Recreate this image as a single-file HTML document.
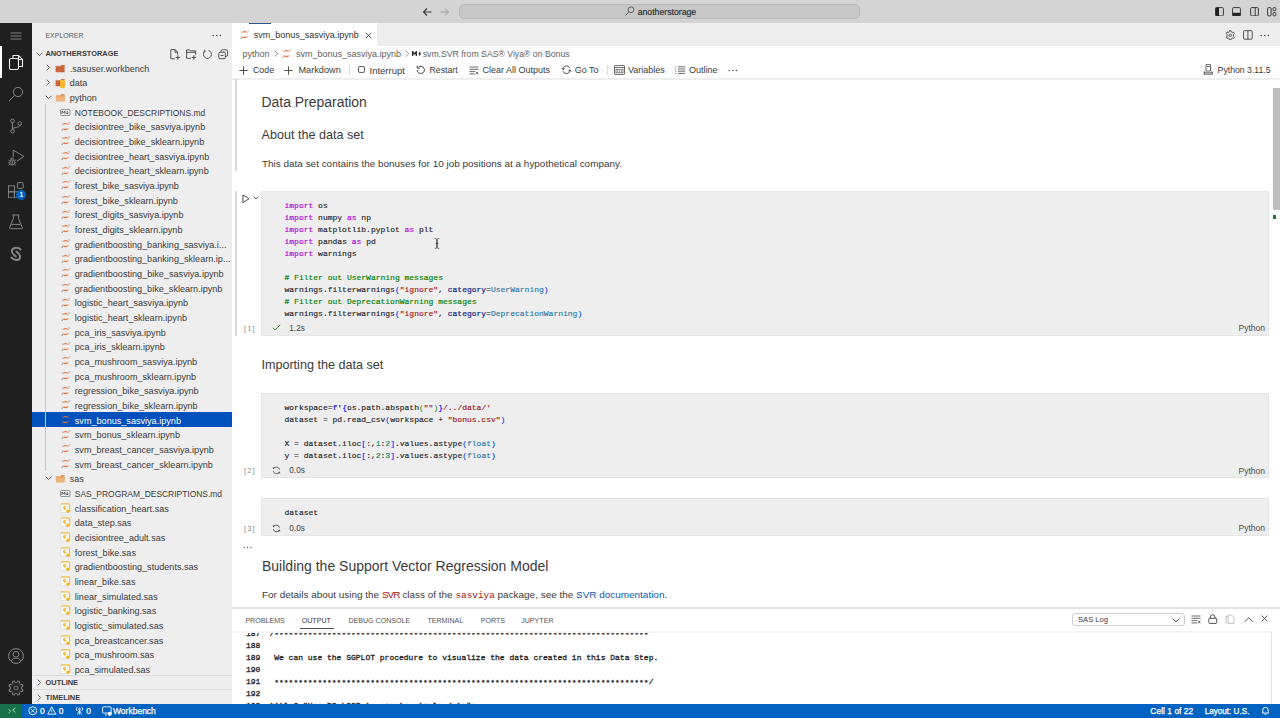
<!DOCTYPE html>
<html><head><meta charset="utf-8"><title>VS Code</title>
<style>
html,body{margin:0;padding:0;}
body{width:1280px;height:718px;overflow:hidden;position:relative;background:#fff;font-family:'Liberation Sans',sans-serif;}
</style></head><body>
<div style="position:absolute;left:0px;top:0px;width:1280px;height:22.5px;background:#d4d4d4;"></div><svg style="position:absolute;left:422px;top:7px;" width="10" height="10" viewBox="0 0 10 10"><path d="M9.5 5H1.5M5 1.5L1.5 5L5 8.5" fill="none" stroke="#3b3b3b" stroke-width="1.2"/></svg><svg style="position:absolute;left:440px;top:7px;" width="10" height="10" viewBox="0 0 10 10"><path d="M0.5 5H8.5M5 1.5L8.5 5L5 8.5" fill="none" stroke="#9a9a9a" stroke-width="1"/></svg><div style="position:absolute;left:458.75px;top:3.9px;width:401px;height:15.6px;background:#c7c7c7;box-sizing:border-box;border:1px solid #b9b9b9;border-radius:5px;"></div><svg style="position:absolute;left:625.3px;top:6.4px;" width="10" height="10" viewBox="0 0 10 10"><circle cx="6" cy="3.8" r="2.9" fill="none" stroke="#444" stroke-width="0.8"/><path d="M3.9 5.9L0.6 9.4" stroke="#444" stroke-width="0.8"/></svg><div style="position:absolute;left:637.7px;top:7.63px;font:400 8.7px/8.7px 'Liberation Sans',sans-serif;color:#2a2a2a;white-space:pre;-webkit-text-stroke:0.15px #2a2a2a;">anotherstorage</div><svg style="position:absolute;left:1215px;top:6.8px;" width="9" height="9.5" viewBox="0 0 9 9.5"><rect x="0.6" y="0.6" width="7.8" height="8.3" rx="1" fill="none" stroke="#3b3b3b" stroke-width="1"/><rect x="0.6" y="0.6" width="3.4" height="8.3" fill="#222"/></svg><svg style="position:absolute;left:1232px;top:6.8px;" width="9" height="9.5" viewBox="0 0 9 9.5"><rect x="0.6" y="0.6" width="7.8" height="8.3" rx="1" fill="none" stroke="#3b3b3b" stroke-width="1"/><rect x="0.6" y="5.8" width="7.8" height="3.1" fill="#222"/></svg><svg style="position:absolute;left:1249.5px;top:6.8px;" width="9" height="9.5" viewBox="0 0 9 9.5"><rect x="0.6" y="0.6" width="7.8" height="8.3" rx="1" fill="none" stroke="#3b3b3b" stroke-width="1"/><path d="M5.2 0.6V8.9" stroke="#3b3b3b" stroke-width="1"/></svg><svg style="position:absolute;left:1267px;top:6.8px;" width="10" height="10" viewBox="0 0 10 10"><rect x="0.6" y="0.6" width="3.5" height="8.3" rx="1" fill="none" stroke="#3b3b3b" stroke-width="1"/><rect x="6" y="0.6" width="2.8" height="3.2" rx="1" fill="none" stroke="#3b3b3b" stroke-width="1"/><rect x="6" y="5.5" width="2.8" height="3.4" rx="1" fill="none" stroke="#3b3b3b" stroke-width="1"/></svg><div style="position:absolute;left:0px;top:22.5px;width:32px;height:681.5px;background:#1f1f1f;"></div><svg style="position:absolute;left:10px;top:31.5px;" width="12" height="8" viewBox="0 0 12 8"><path d="M0.5 1H11.5M0.5 4H11.5M0.5 7H11.5" stroke="#8a8a8a" stroke-width="0.9"/></svg><div style="position:absolute;left:0px;top:46px;width:1.5px;height:32px;background:#ffffff;"></div><svg style="position:absolute;left:8px;top:54px;" width="16" height="16" viewBox="0 0 16 16"><g fill="none" stroke="#f0f0f0" stroke-width="1.1"><path d="M5 4V1.5H10.5L14.5 5.5V12.5H10.5"/><path d="M10.5 1.5V5.5H14.5"/><rect x="1.5" y="4.5" width="9" height="11" rx="1.5"/></g></svg><svg style="position:absolute;left:8px;top:86px;" width="16" height="16" viewBox="0 0 16 16"><g fill="none" stroke="#858585" stroke-width="1"><circle cx="10" cy="6" r="4.6"/><path d="M6.7 9.3L1 15"/></g></svg><svg style="position:absolute;left:8px;top:118px;" width="16" height="16" viewBox="0 0 16 16"><g fill="none" stroke="#858585" stroke-width="1"><circle cx="4.5" cy="2.8" r="1.8"/><circle cx="4.5" cy="13.2" r="1.8"/><circle cx="11.8" cy="5.6" r="1.8"/><path d="M4.5 4.6V11.4M11.8 7.4C11.8 10 4.5 9 4.5 11.4"/></g></svg><svg style="position:absolute;left:8px;top:150px;" width="16" height="16" viewBox="0 0 16 16"><g fill="none" stroke="#858585" stroke-width="1"><path d="M5.2 7V0L15.9 6.5L8.9 11.2"/><path d="M2.6 9.6A1.6 1.6 0 0 1 5.8 9.6"/><ellipse cx="4.2" cy="12.4" rx="2.4" ry="2.7"/><path d="M4.2 10.2V15M0.6 10L1.9 10.9M7.8 10L6.5 10.9M0.4 12.6H1.8M6.6 12.6H8M0.6 15.2L1.9 14.2M7.8 15.2L6.5 14.2"/></g></svg><svg style="position:absolute;left:8px;top:182px;" width="16" height="16" viewBox="0 0 16 16"><g fill="none" stroke="#858585" stroke-width="1"><rect x="0.4" y="3.8" width="6" height="6"/><rect x="0.4" y="9.8" width="6" height="6"/><rect x="6.4" y="9.8" width="6" height="6"/><rect x="9.4" y="0.6" width="5.8" height="5.8" rx="0.8"/></g></svg><div style="position:absolute;left:16.1px;top:190px;width:10.2px;height:10.2px;border-radius:50%;background:#0062c1;color:#fff;font:bold 6.5px/10.2px 'Liberation Sans',sans-serif;text-align:center;">1</div><svg style="position:absolute;left:8px;top:214px;" width="16" height="16" viewBox="0 0 16 16"><g fill="none" stroke="#858585" stroke-width="1"><path d="M4.4 1H11.4M5.3 1V4.6L1.6 13.6C1.4 14.2 1.7 14.7 2.3 14.7H13.7C14.3 14.7 14.6 14.2 14.4 13.6L10.6 4.6V1M3.3 10.4H12.7"/></g></svg><svg style="position:absolute;left:8px;top:246px;" width="16" height="16" viewBox="0 0 16 16"><g fill="none" stroke="#858585" stroke-width="1"><path d="M12.4 3.5C11 1.3 5.5 0.6 4 4.2C3.1 6.5 5.5 8.6 7.8 10.3" stroke-width="2.1" stroke-linecap="round"/><path d="M8.6 5.6C10.4 7 12.7 8.8 12 11.6C11.1 14.6 6.2 15 3.6 11.6" stroke-width="2.1" stroke-linecap="round"/></g></svg><svg style="position:absolute;left:8px;top:648px;" width="16" height="16" viewBox="0 0 16 16"><g fill="none" stroke="#858585" stroke-width="1"><circle cx="8" cy="8" r="7.4"/><circle cx="8" cy="6.3" r="2.9"/><path d="M3 13.2C4 10.9 6 10.2 8 10.2C10 10.2 12 10.9 13 13.2"/></g></svg><svg style="position:absolute;left:8px;top:680px;" width="16" height="16" viewBox="0 0 16 16"><g fill="none" stroke="#858585" stroke-width="1"><circle cx="8" cy="8" r="2"/><path d="M8.89 2.67 L9.58 0.87 L11.92 1.84 L11.14 3.60 L12.40 4.86 L14.16 4.08 L15.13 6.42 L13.33 7.11 L13.33 8.89 L15.13 9.58 L14.16 11.92 L12.40 11.14 L11.14 12.40 L11.92 14.16 L9.58 15.13 L8.89 13.33 L7.11 13.33 L6.42 15.13 L4.08 14.16 L4.86 12.40 L3.60 11.14 L1.84 11.92 L0.87 9.58 L2.67 8.89 L2.67 7.11 L0.87 6.42 L1.84 4.08 L3.60 4.86 L4.86 3.60 L4.08 1.84 L6.42 0.87 L7.11 2.67Z" stroke-linejoin="miter"/></g></svg><div style="position:absolute;left:32px;top:22.5px;width:200px;height:681.5px;background:#eeeeee;"></div><div style="position:absolute;left:45.4px;top:31.87px;font:400 7.0px/7.0px 'Liberation Sans',sans-serif;color:#616161;white-space:pre;">EXPLORER</div><svg style="position:absolute;left:212px;top:33.5px;" width="10" height="3" viewBox="0 0 10 3"><circle cx="1.2" cy="1.5" r="0.75" fill="#424242"/><circle cx="4.8" cy="1.5" r="0.75" fill="#424242"/><circle cx="8.4" cy="1.5" r="0.75" fill="#424242"/></svg><svg style="position:absolute;left:35.5px;top:51.7px;" width="7.2" height="4.4" viewBox="0 0 7.2 4.4"><path d="M0.7 0.7L3.6 3.6L6.5 0.7" fill="none" stroke="#616161" stroke-width="0.9"/></svg><div style="position:absolute;left:45.4px;top:50.23px;font:700 7.4px/7.4px 'Liberation Sans',sans-serif;color:#3b3b3b;white-space:pre;">ANOTHERSTORAGE</div><svg style="position:absolute;left:170px;top:48.5px;" width="12" height="12" viewBox="0 0 12 12"><g fill="none" stroke="#424242" stroke-width="0.9"><path d="M4.8 9.8H0.8V0.6H5.2L7.6 3V5.6"/><path d="M5 0.6V3.2H7.6"/><path d="M7.9 6.2V10.6M5.7 8.4H10.1"/></g></svg><svg style="position:absolute;left:186px;top:48.5px;" width="12" height="12" viewBox="0 0 12 12"><g fill="none" stroke="#424242" stroke-width="0.9"><path d="M4.8 9.3H0.6V0.8H3.6L4.6 1.8H9.6V5.6"/><path d="M0.6 3.3H9.6"/><path d="M7.9 6.2V10.6M5.7 8.4H10.1"/></g></svg><svg style="position:absolute;left:202px;top:48.5px;" width="11" height="11" viewBox="0 0 11 11"><g fill="none" stroke="#424242" stroke-width="0.9"><path d="M3 2.2A4 4 0 1 0 6.5 1.5"/><path d="M2.2 0.5L3.2 2.4L1.2 3.3"/></g></svg><svg style="position:absolute;left:218px;top:48.5px;" width="11" height="11" viewBox="0 0 11 11"><g fill="none" stroke="#424242" stroke-width="0.9"><rect x="0.8" y="3.2" width="6.5" height="6.5" rx="1.2"/><path d="M3 3.2V2.2C3 1.4 3.6 0.8 4.4 0.8H8.2C9 0.8 9.6 1.4 9.6 2.2V6C9.6 6.8 9 7.4 8.2 7.4H7.3"/><path d="M2.5 6.5H5.6"/></g></svg><svg style="position:absolute;left:46px;top:64.0px;" width="4.4" height="7.2" viewBox="0 0 4.4 7.2"><path d="M0.7 0.7L3.6 3.6L0.7 6.5" fill="none" stroke="#616161" stroke-width="0.9"/></svg><svg style="position:absolute;left:55.3px;top:63.800000000000004px;" width="10.5" height="10" viewBox="0 0 10.5 10"><path d="M0.6 2.2H5.3L6.3 1H9.6V8.3H0.6Z" fill="#c9653b"/><path d="M0.6 2.2H9.6" stroke="#d47a4c" stroke-width="0.6"/></svg><div style="position:absolute;left:69.7px;top:64.68px;font:400 9.0px/9.0px 'Liberation Sans',sans-serif;color:#3b3b3b;white-space:pre;">.sasuser.workbench</div><svg style="position:absolute;left:46px;top:78.667px;" width="4.4" height="7.2" viewBox="0 0 4.4 7.2"><path d="M0.7 0.7L3.6 3.6L0.7 6.5" fill="none" stroke="#616161" stroke-width="0.9"/></svg><svg style="position:absolute;left:55.3px;top:78.467px;" width="10.5" height="11" viewBox="0 0 10.5 11"><path d="M0.6 2.2H5.3L6.3 1H9.6V8.3H0.6Z" fill="#c9653b"/><path d="M5.2 2.6C5.2 1.6 9.8 1.6 9.8 2.6V9.4C9.8 10.4 5.2 10.4 5.2 9.4Z" fill="#f4b72a"/><path d="M5.2 2.8C5.2 3.6 9.8 3.6 9.8 2.8" fill="none" stroke="#f9d26b" stroke-width="0.6"/></svg><div style="position:absolute;left:69.7px;top:79.35px;font:400 9.0px/9.0px 'Liberation Sans',sans-serif;color:#3b3b3b;white-space:pre;">data</div><svg style="position:absolute;left:44.8px;top:94.834px;" width="7.2" height="4.4" viewBox="0 0 7.2 4.4"><path d="M0.7 0.7L3.6 3.6L6.5 0.7" fill="none" stroke="#616161" stroke-width="0.9"/></svg><svg style="position:absolute;left:55.3px;top:93.134px;" width="10.5" height="10" viewBox="0 0 10.5 10"><path d="M1.2 2.2H5.3L6.3 1H9.6V8.3H1.2Z" fill="#e29a5e"/><path d="M0.3 3.6H9.6V8.3H1.3Z" fill="#eeb47e"/></svg><div style="position:absolute;left:69.7px;top:94.01px;font:400 9.0px/9.0px 'Liberation Sans',sans-serif;color:#3b3b3b;white-space:pre;">python</div><svg style="position:absolute;left:60.2px;top:108.50099999999999px;" width="10.5" height="7" viewBox="0 0 10.5 7"><rect x="0.5" y="0.5" width="9.5" height="6" rx="0.8" fill="none" stroke="#8a8a8a" stroke-width="0.9"/><path d="M2 5V2L3.4 3.6L4.8 2V5M7.2 2V4.8M6 3.7L7.2 5L8.4 3.7" fill="none" stroke="#424242" stroke-width="0.8"/></svg><div style="position:absolute;left:74.8px;top:109.13px;font:400 8.47px/8.47px 'Liberation Sans',sans-serif;color:#3b3b3b;white-space:pre;">NOTEBOOK_DESCRIPTIONS.md</div><svg style="position:absolute;left:61.2px;top:121.768px;" width="9" height="9" viewBox="0 0 9 9"><path d="M0.6 2.9Q4.5 -0.9 8.4 2.9Q4.5 1.8 0.6 2.9Z" fill="#e8733a"/><path d="M0.6 6.3Q4.5 10.1 8.4 6.3Q4.5 7.4 0.6 6.3Z" fill="#e8733a"/><circle cx="8.1" cy="0.9" r="0.55" fill="#7a7a7a"/><circle cx="1.2" cy="8.2" r="0.65" fill="#7a7a7a"/><circle cx="0.8" cy="1.6" r="0.35" fill="#9a9a9a"/></svg><div style="position:absolute;left:74.8px;top:123.26px;font:400 9.1px/9.1px 'Liberation Sans',sans-serif;color:#3b3b3b;white-space:pre;">decisiontree_bike_sasviya.ipynb</div><svg style="position:absolute;left:61.2px;top:136.435px;" width="9" height="9" viewBox="0 0 9 9"><path d="M0.6 2.9Q4.5 -0.9 8.4 2.9Q4.5 1.8 0.6 2.9Z" fill="#e8733a"/><path d="M0.6 6.3Q4.5 10.1 8.4 6.3Q4.5 7.4 0.6 6.3Z" fill="#e8733a"/><circle cx="8.1" cy="0.9" r="0.55" fill="#7a7a7a"/><circle cx="1.2" cy="8.2" r="0.65" fill="#7a7a7a"/><circle cx="0.8" cy="1.6" r="0.35" fill="#9a9a9a"/></svg><div style="position:absolute;left:74.8px;top:137.93px;font:400 9.1px/9.1px 'Liberation Sans',sans-serif;color:#3b3b3b;white-space:pre;">decisiontree_bike_sklearn.ipynb</div><svg style="position:absolute;left:61.2px;top:151.102px;" width="9" height="9" viewBox="0 0 9 9"><path d="M0.6 2.9Q4.5 -0.9 8.4 2.9Q4.5 1.8 0.6 2.9Z" fill="#e8733a"/><path d="M0.6 6.3Q4.5 10.1 8.4 6.3Q4.5 7.4 0.6 6.3Z" fill="#e8733a"/><circle cx="8.1" cy="0.9" r="0.55" fill="#7a7a7a"/><circle cx="1.2" cy="8.2" r="0.65" fill="#7a7a7a"/><circle cx="0.8" cy="1.6" r="0.35" fill="#9a9a9a"/></svg><div style="position:absolute;left:74.8px;top:152.60px;font:400 9.1px/9.1px 'Liberation Sans',sans-serif;color:#3b3b3b;white-space:pre;">decisiontree_heart_sasviya.ipynb</div><svg style="position:absolute;left:61.2px;top:165.769px;" width="9" height="9" viewBox="0 0 9 9"><path d="M0.6 2.9Q4.5 -0.9 8.4 2.9Q4.5 1.8 0.6 2.9Z" fill="#e8733a"/><path d="M0.6 6.3Q4.5 10.1 8.4 6.3Q4.5 7.4 0.6 6.3Z" fill="#e8733a"/><circle cx="8.1" cy="0.9" r="0.55" fill="#7a7a7a"/><circle cx="1.2" cy="8.2" r="0.65" fill="#7a7a7a"/><circle cx="0.8" cy="1.6" r="0.35" fill="#9a9a9a"/></svg><div style="position:absolute;left:74.8px;top:167.24px;font:400 9.13px/9.13px 'Liberation Sans',sans-serif;color:#3b3b3b;white-space:pre;">decisiontree_heart_sklearn.ipynb</div><svg style="position:absolute;left:61.2px;top:180.436px;" width="9" height="9" viewBox="0 0 9 9"><path d="M0.6 2.9Q4.5 -0.9 8.4 2.9Q4.5 1.8 0.6 2.9Z" fill="#e8733a"/><path d="M0.6 6.3Q4.5 10.1 8.4 6.3Q4.5 7.4 0.6 6.3Z" fill="#e8733a"/><circle cx="8.1" cy="0.9" r="0.55" fill="#7a7a7a"/><circle cx="1.2" cy="8.2" r="0.65" fill="#7a7a7a"/><circle cx="0.8" cy="1.6" r="0.35" fill="#9a9a9a"/></svg><div style="position:absolute;left:74.8px;top:181.93px;font:400 9.1px/9.1px 'Liberation Sans',sans-serif;color:#3b3b3b;white-space:pre;">forest_bike_sasviya.ipynb</div><svg style="position:absolute;left:61.2px;top:195.10299999999998px;" width="9" height="9" viewBox="0 0 9 9"><path d="M0.6 2.9Q4.5 -0.9 8.4 2.9Q4.5 1.8 0.6 2.9Z" fill="#e8733a"/><path d="M0.6 6.3Q4.5 10.1 8.4 6.3Q4.5 7.4 0.6 6.3Z" fill="#e8733a"/><circle cx="8.1" cy="0.9" r="0.55" fill="#7a7a7a"/><circle cx="1.2" cy="8.2" r="0.65" fill="#7a7a7a"/><circle cx="0.8" cy="1.6" r="0.35" fill="#9a9a9a"/></svg><div style="position:absolute;left:74.8px;top:196.60px;font:400 9.1px/9.1px 'Liberation Sans',sans-serif;color:#3b3b3b;white-space:pre;">forest_bike_sklearn.ipynb</div><svg style="position:absolute;left:61.2px;top:209.77px;" width="9" height="9" viewBox="0 0 9 9"><path d="M0.6 2.9Q4.5 -0.9 8.4 2.9Q4.5 1.8 0.6 2.9Z" fill="#e8733a"/><path d="M0.6 6.3Q4.5 10.1 8.4 6.3Q4.5 7.4 0.6 6.3Z" fill="#e8733a"/><circle cx="8.1" cy="0.9" r="0.55" fill="#7a7a7a"/><circle cx="1.2" cy="8.2" r="0.65" fill="#7a7a7a"/><circle cx="0.8" cy="1.6" r="0.35" fill="#9a9a9a"/></svg><div style="position:absolute;left:74.8px;top:211.27px;font:400 9.1px/9.1px 'Liberation Sans',sans-serif;color:#3b3b3b;white-space:pre;">forest_digits_sasviya.ipynb</div><svg style="position:absolute;left:61.2px;top:224.43699999999998px;" width="9" height="9" viewBox="0 0 9 9"><path d="M0.6 2.9Q4.5 -0.9 8.4 2.9Q4.5 1.8 0.6 2.9Z" fill="#e8733a"/><path d="M0.6 6.3Q4.5 10.1 8.4 6.3Q4.5 7.4 0.6 6.3Z" fill="#e8733a"/><circle cx="8.1" cy="0.9" r="0.55" fill="#7a7a7a"/><circle cx="1.2" cy="8.2" r="0.65" fill="#7a7a7a"/><circle cx="0.8" cy="1.6" r="0.35" fill="#9a9a9a"/></svg><div style="position:absolute;left:74.8px;top:225.93px;font:400 9.1px/9.1px 'Liberation Sans',sans-serif;color:#3b3b3b;white-space:pre;">forest_digits_sklearn.ipynb</div><svg style="position:absolute;left:61.2px;top:239.104px;" width="9" height="9" viewBox="0 0 9 9"><path d="M0.6 2.9Q4.5 -0.9 8.4 2.9Q4.5 1.8 0.6 2.9Z" fill="#e8733a"/><path d="M0.6 6.3Q4.5 10.1 8.4 6.3Q4.5 7.4 0.6 6.3Z" fill="#e8733a"/><circle cx="8.1" cy="0.9" r="0.55" fill="#7a7a7a"/><circle cx="1.2" cy="8.2" r="0.65" fill="#7a7a7a"/><circle cx="0.8" cy="1.6" r="0.35" fill="#9a9a9a"/></svg><div style="position:absolute;left:74.8px;top:240.60px;font:400 9.1px/9.1px 'Liberation Sans',sans-serif;color:#3b3b3b;white-space:pre;">gradientboosting_banking_sasviya.i...</div><svg style="position:absolute;left:61.2px;top:253.771px;" width="9" height="9" viewBox="0 0 9 9"><path d="M0.6 2.9Q4.5 -0.9 8.4 2.9Q4.5 1.8 0.6 2.9Z" fill="#e8733a"/><path d="M0.6 6.3Q4.5 10.1 8.4 6.3Q4.5 7.4 0.6 6.3Z" fill="#e8733a"/><circle cx="8.1" cy="0.9" r="0.55" fill="#7a7a7a"/><circle cx="1.2" cy="8.2" r="0.65" fill="#7a7a7a"/><circle cx="0.8" cy="1.6" r="0.35" fill="#9a9a9a"/></svg><div style="position:absolute;left:74.8px;top:255.27px;font:400 9.1px/9.1px 'Liberation Sans',sans-serif;color:#3b3b3b;white-space:pre;">gradientboosting_banking_sklearn.ip...</div><svg style="position:absolute;left:61.2px;top:268.438px;" width="9" height="9" viewBox="0 0 9 9"><path d="M0.6 2.9Q4.5 -0.9 8.4 2.9Q4.5 1.8 0.6 2.9Z" fill="#e8733a"/><path d="M0.6 6.3Q4.5 10.1 8.4 6.3Q4.5 7.4 0.6 6.3Z" fill="#e8733a"/><circle cx="8.1" cy="0.9" r="0.55" fill="#7a7a7a"/><circle cx="1.2" cy="8.2" r="0.65" fill="#7a7a7a"/><circle cx="0.8" cy="1.6" r="0.35" fill="#9a9a9a"/></svg><div style="position:absolute;left:74.8px;top:269.92px;font:400 9.12px/9.12px 'Liberation Sans',sans-serif;color:#3b3b3b;white-space:pre;">gradientboosting_bike_sasviya.ipynb</div><svg style="position:absolute;left:61.2px;top:283.10499999999996px;" width="9" height="9" viewBox="0 0 9 9"><path d="M0.6 2.9Q4.5 -0.9 8.4 2.9Q4.5 1.8 0.6 2.9Z" fill="#e8733a"/><path d="M0.6 6.3Q4.5 10.1 8.4 6.3Q4.5 7.4 0.6 6.3Z" fill="#e8733a"/><circle cx="8.1" cy="0.9" r="0.55" fill="#7a7a7a"/><circle cx="1.2" cy="8.2" r="0.65" fill="#7a7a7a"/><circle cx="0.8" cy="1.6" r="0.35" fill="#9a9a9a"/></svg><div style="position:absolute;left:74.8px;top:284.60px;font:400 9.1px/9.1px 'Liberation Sans',sans-serif;color:#3b3b3b;white-space:pre;">gradientboosting_bike_sklearn.ipynb</div><svg style="position:absolute;left:61.2px;top:297.772px;" width="9" height="9" viewBox="0 0 9 9"><path d="M0.6 2.9Q4.5 -0.9 8.4 2.9Q4.5 1.8 0.6 2.9Z" fill="#e8733a"/><path d="M0.6 6.3Q4.5 10.1 8.4 6.3Q4.5 7.4 0.6 6.3Z" fill="#e8733a"/><circle cx="8.1" cy="0.9" r="0.55" fill="#7a7a7a"/><circle cx="1.2" cy="8.2" r="0.65" fill="#7a7a7a"/><circle cx="0.8" cy="1.6" r="0.35" fill="#9a9a9a"/></svg><div style="position:absolute;left:74.8px;top:299.27px;font:400 9.1px/9.1px 'Liberation Sans',sans-serif;color:#3b3b3b;white-space:pre;">logistic_heart_sasviya.ipynb</div><svg style="position:absolute;left:61.2px;top:312.43899999999996px;" width="9" height="9" viewBox="0 0 9 9"><path d="M0.6 2.9Q4.5 -0.9 8.4 2.9Q4.5 1.8 0.6 2.9Z" fill="#e8733a"/><path d="M0.6 6.3Q4.5 10.1 8.4 6.3Q4.5 7.4 0.6 6.3Z" fill="#e8733a"/><circle cx="8.1" cy="0.9" r="0.55" fill="#7a7a7a"/><circle cx="1.2" cy="8.2" r="0.65" fill="#7a7a7a"/><circle cx="0.8" cy="1.6" r="0.35" fill="#9a9a9a"/></svg><div style="position:absolute;left:74.8px;top:313.93px;font:400 9.1px/9.1px 'Liberation Sans',sans-serif;color:#3b3b3b;white-space:pre;">logistic_heart_sklearn.ipynb</div><svg style="position:absolute;left:61.2px;top:327.10599999999994px;" width="9" height="9" viewBox="0 0 9 9"><path d="M0.6 2.9Q4.5 -0.9 8.4 2.9Q4.5 1.8 0.6 2.9Z" fill="#e8733a"/><path d="M0.6 6.3Q4.5 10.1 8.4 6.3Q4.5 7.4 0.6 6.3Z" fill="#e8733a"/><circle cx="8.1" cy="0.9" r="0.55" fill="#7a7a7a"/><circle cx="1.2" cy="8.2" r="0.65" fill="#7a7a7a"/><circle cx="0.8" cy="1.6" r="0.35" fill="#9a9a9a"/></svg><div style="position:absolute;left:74.8px;top:328.60px;font:400 9.1px/9.1px 'Liberation Sans',sans-serif;color:#3b3b3b;white-space:pre;">pca_iris_sasviya.ipynb</div><svg style="position:absolute;left:61.2px;top:341.77299999999997px;" width="9" height="9" viewBox="0 0 9 9"><path d="M0.6 2.9Q4.5 -0.9 8.4 2.9Q4.5 1.8 0.6 2.9Z" fill="#e8733a"/><path d="M0.6 6.3Q4.5 10.1 8.4 6.3Q4.5 7.4 0.6 6.3Z" fill="#e8733a"/><circle cx="8.1" cy="0.9" r="0.55" fill="#7a7a7a"/><circle cx="1.2" cy="8.2" r="0.65" fill="#7a7a7a"/><circle cx="0.8" cy="1.6" r="0.35" fill="#9a9a9a"/></svg><div style="position:absolute;left:74.8px;top:343.27px;font:400 9.1px/9.1px 'Liberation Sans',sans-serif;color:#3b3b3b;white-space:pre;">pca_iris_sklearn.ipynb</div><svg style="position:absolute;left:61.2px;top:356.43999999999994px;" width="9" height="9" viewBox="0 0 9 9"><path d="M0.6 2.9Q4.5 -0.9 8.4 2.9Q4.5 1.8 0.6 2.9Z" fill="#e8733a"/><path d="M0.6 6.3Q4.5 10.1 8.4 6.3Q4.5 7.4 0.6 6.3Z" fill="#e8733a"/><circle cx="8.1" cy="0.9" r="0.55" fill="#7a7a7a"/><circle cx="1.2" cy="8.2" r="0.65" fill="#7a7a7a"/><circle cx="0.8" cy="1.6" r="0.35" fill="#9a9a9a"/></svg><div style="position:absolute;left:74.8px;top:357.94px;font:400 9.1px/9.1px 'Liberation Sans',sans-serif;color:#3b3b3b;white-space:pre;">pca_mushroom_sasviya.ipynb</div><svg style="position:absolute;left:61.2px;top:371.10699999999997px;" width="9" height="9" viewBox="0 0 9 9"><path d="M0.6 2.9Q4.5 -0.9 8.4 2.9Q4.5 1.8 0.6 2.9Z" fill="#e8733a"/><path d="M0.6 6.3Q4.5 10.1 8.4 6.3Q4.5 7.4 0.6 6.3Z" fill="#e8733a"/><circle cx="8.1" cy="0.9" r="0.55" fill="#7a7a7a"/><circle cx="1.2" cy="8.2" r="0.65" fill="#7a7a7a"/><circle cx="0.8" cy="1.6" r="0.35" fill="#9a9a9a"/></svg><div style="position:absolute;left:74.8px;top:372.60px;font:400 9.1px/9.1px 'Liberation Sans',sans-serif;color:#3b3b3b;white-space:pre;">pca_mushroom_sklearn.ipynb</div><svg style="position:absolute;left:61.2px;top:385.77399999999994px;" width="9" height="9" viewBox="0 0 9 9"><path d="M0.6 2.9Q4.5 -0.9 8.4 2.9Q4.5 1.8 0.6 2.9Z" fill="#e8733a"/><path d="M0.6 6.3Q4.5 10.1 8.4 6.3Q4.5 7.4 0.6 6.3Z" fill="#e8733a"/><circle cx="8.1" cy="0.9" r="0.55" fill="#7a7a7a"/><circle cx="1.2" cy="8.2" r="0.65" fill="#7a7a7a"/><circle cx="0.8" cy="1.6" r="0.35" fill="#9a9a9a"/></svg><div style="position:absolute;left:74.8px;top:387.27px;font:400 9.1px/9.1px 'Liberation Sans',sans-serif;color:#3b3b3b;white-space:pre;">regression_bike_sasviya.ipynb</div><svg style="position:absolute;left:61.2px;top:400.441px;" width="9" height="9" viewBox="0 0 9 9"><path d="M0.6 2.9Q4.5 -0.9 8.4 2.9Q4.5 1.8 0.6 2.9Z" fill="#e8733a"/><path d="M0.6 6.3Q4.5 10.1 8.4 6.3Q4.5 7.4 0.6 6.3Z" fill="#e8733a"/><circle cx="8.1" cy="0.9" r="0.55" fill="#7a7a7a"/><circle cx="1.2" cy="8.2" r="0.65" fill="#7a7a7a"/><circle cx="0.8" cy="1.6" r="0.35" fill="#9a9a9a"/></svg><div style="position:absolute;left:74.8px;top:401.94px;font:400 9.1px/9.1px 'Liberation Sans',sans-serif;color:#3b3b3b;white-space:pre;">regression_bike_sklearn.ipynb</div><div style="position:absolute;left:32px;top:412.20799999999997px;width:200px;height:14.667px;background:#0051bd;"></div><svg style="position:absolute;left:61.2px;top:415.10799999999995px;" width="9" height="9" viewBox="0 0 9 9"><path d="M0.6 2.9Q4.5 -0.9 8.4 2.9Q4.5 1.8 0.6 2.9Z" fill="#e8733a"/><path d="M0.6 6.3Q4.5 10.1 8.4 6.3Q4.5 7.4 0.6 6.3Z" fill="#e8733a"/><circle cx="8.1" cy="0.9" r="0.55" fill="#7a7a7a"/><circle cx="1.2" cy="8.2" r="0.65" fill="#7a7a7a"/><circle cx="0.8" cy="1.6" r="0.35" fill="#9a9a9a"/></svg><div style="position:absolute;left:74.8px;top:416.60px;font:400 9.1px/9.1px 'Liberation Sans',sans-serif;color:#ffffff;white-space:pre;">svm_bonus_sasviya.ipynb</div><svg style="position:absolute;left:61.2px;top:429.775px;" width="9" height="9" viewBox="0 0 9 9"><path d="M0.6 2.9Q4.5 -0.9 8.4 2.9Q4.5 1.8 0.6 2.9Z" fill="#e8733a"/><path d="M0.6 6.3Q4.5 10.1 8.4 6.3Q4.5 7.4 0.6 6.3Z" fill="#e8733a"/><circle cx="8.1" cy="0.9" r="0.55" fill="#7a7a7a"/><circle cx="1.2" cy="8.2" r="0.65" fill="#7a7a7a"/><circle cx="0.8" cy="1.6" r="0.35" fill="#9a9a9a"/></svg><div style="position:absolute;left:74.8px;top:431.27px;font:400 9.1px/9.1px 'Liberation Sans',sans-serif;color:#3b3b3b;white-space:pre;">svm_bonus_sklearn.ipynb</div><svg style="position:absolute;left:61.2px;top:444.44199999999995px;" width="9" height="9" viewBox="0 0 9 9"><path d="M0.6 2.9Q4.5 -0.9 8.4 2.9Q4.5 1.8 0.6 2.9Z" fill="#e8733a"/><path d="M0.6 6.3Q4.5 10.1 8.4 6.3Q4.5 7.4 0.6 6.3Z" fill="#e8733a"/><circle cx="8.1" cy="0.9" r="0.55" fill="#7a7a7a"/><circle cx="1.2" cy="8.2" r="0.65" fill="#7a7a7a"/><circle cx="0.8" cy="1.6" r="0.35" fill="#9a9a9a"/></svg><div style="position:absolute;left:74.8px;top:445.94px;font:400 9.1px/9.1px 'Liberation Sans',sans-serif;color:#3b3b3b;white-space:pre;">svm_breast_cancer_sasviya.ipynb</div><svg style="position:absolute;left:61.2px;top:459.109px;" width="9" height="9" viewBox="0 0 9 9"><path d="M0.6 2.9Q4.5 -0.9 8.4 2.9Q4.5 1.8 0.6 2.9Z" fill="#e8733a"/><path d="M0.6 6.3Q4.5 10.1 8.4 6.3Q4.5 7.4 0.6 6.3Z" fill="#e8733a"/><circle cx="8.1" cy="0.9" r="0.55" fill="#7a7a7a"/><circle cx="1.2" cy="8.2" r="0.65" fill="#7a7a7a"/><circle cx="0.8" cy="1.6" r="0.35" fill="#9a9a9a"/></svg><div style="position:absolute;left:74.8px;top:460.60px;font:400 9.1px/9.1px 'Liberation Sans',sans-serif;color:#3b3b3b;white-space:pre;">svm_breast_cancer_sklearn.ipynb</div><svg style="position:absolute;left:44.8px;top:476.176px;" width="7.2" height="4.4" viewBox="0 0 7.2 4.4"><path d="M0.7 0.7L3.6 3.6L6.5 0.7" fill="none" stroke="#616161" stroke-width="0.9"/></svg><svg style="position:absolute;left:55.3px;top:474.476px;" width="10.5" height="10" viewBox="0 0 10.5 10"><path d="M1.2 2.2H5.3L6.3 1H9.6V8.3H1.2Z" fill="#e29a5e"/><path d="M0.3 3.6H9.6V8.3H1.3Z" fill="#eeb47e"/></svg><div style="position:absolute;left:69.7px;top:475.36px;font:400 9.0px/9.0px 'Liberation Sans',sans-serif;color:#3b3b3b;white-space:pre;">sas</div><svg style="position:absolute;left:60.2px;top:489.843px;" width="10.5" height="7" viewBox="0 0 10.5 7"><rect x="0.5" y="0.5" width="9.5" height="6" rx="0.8" fill="none" stroke="#8a8a8a" stroke-width="0.9"/><path d="M2 5V2L3.4 3.6L4.8 2V5M7.2 2V4.8M6 3.7L7.2 5L8.4 3.7" fill="none" stroke="#424242" stroke-width="0.8"/></svg><div style="position:absolute;left:74.8px;top:490.49px;font:400 8.45px/8.45px 'Liberation Sans',sans-serif;color:#3b3b3b;white-space:pre;">SAS_PROGRAM_DESCRIPTIONS.md</div><svg style="position:absolute;left:60.3px;top:502.60999999999996px;" width="10.5" height="10.5" viewBox="0 0 10.5 10.5"><rect x="0.6" y="0.8" width="8.8" height="8.8" rx="0.8" fill="#f7f7f7" stroke="#dcdcdc" stroke-width="0.8"/><path d="M0.8 0.8H8.6Q9.6 0.8 9.6 1.8V8.6" fill="none" stroke="#f6c443" stroke-width="1.2"/><path d="M3.2 3.6L6.6 2.9L5.3 4.8L6.8 5.2L3.6 7.6L4.4 5.8L2.9 5.5Z" fill="#f4bd3a"/><circle cx="7.9" cy="8.3" r="1.7" fill="#f3b72c"/></svg><div style="position:absolute;left:74.8px;top:504.61px;font:400 9.1px/9.1px 'Liberation Sans',sans-serif;color:#3b3b3b;white-space:pre;">classification_heart.sas</div><svg style="position:absolute;left:60.3px;top:517.277px;" width="10.5" height="10.5" viewBox="0 0 10.5 10.5"><rect x="0.6" y="0.8" width="8.8" height="8.8" rx="0.8" fill="#f7f7f7" stroke="#dcdcdc" stroke-width="0.8"/><path d="M0.8 0.8H8.6Q9.6 0.8 9.6 1.8V8.6" fill="none" stroke="#f6c443" stroke-width="1.2"/><path d="M3.2 3.6L6.6 2.9L5.3 4.8L6.8 5.2L3.6 7.6L4.4 5.8L2.9 5.5Z" fill="#f4bd3a"/><circle cx="7.9" cy="8.3" r="1.7" fill="#f3b72c"/></svg><div style="position:absolute;left:74.8px;top:519.27px;font:400 9.1px/9.1px 'Liberation Sans',sans-serif;color:#3b3b3b;white-space:pre;">data_step.sas</div><svg style="position:absolute;left:60.3px;top:531.944px;" width="10.5" height="10.5" viewBox="0 0 10.5 10.5"><rect x="0.6" y="0.8" width="8.8" height="8.8" rx="0.8" fill="#f7f7f7" stroke="#dcdcdc" stroke-width="0.8"/><path d="M0.8 0.8H8.6Q9.6 0.8 9.6 1.8V8.6" fill="none" stroke="#f6c443" stroke-width="1.2"/><path d="M3.2 3.6L6.6 2.9L5.3 4.8L6.8 5.2L3.6 7.6L4.4 5.8L2.9 5.5Z" fill="#f4bd3a"/><circle cx="7.9" cy="8.3" r="1.7" fill="#f3b72c"/></svg><div style="position:absolute;left:74.8px;top:533.94px;font:400 9.1px/9.1px 'Liberation Sans',sans-serif;color:#3b3b3b;white-space:pre;">decisiontree_adult.sas</div><svg style="position:absolute;left:60.3px;top:546.611px;" width="10.5" height="10.5" viewBox="0 0 10.5 10.5"><rect x="0.6" y="0.8" width="8.8" height="8.8" rx="0.8" fill="#f7f7f7" stroke="#dcdcdc" stroke-width="0.8"/><path d="M0.8 0.8H8.6Q9.6 0.8 9.6 1.8V8.6" fill="none" stroke="#f6c443" stroke-width="1.2"/><path d="M3.2 3.6L6.6 2.9L5.3 4.8L6.8 5.2L3.6 7.6L4.4 5.8L2.9 5.5Z" fill="#f4bd3a"/><circle cx="7.9" cy="8.3" r="1.7" fill="#f3b72c"/></svg><div style="position:absolute;left:74.8px;top:548.61px;font:400 9.1px/9.1px 'Liberation Sans',sans-serif;color:#3b3b3b;white-space:pre;">forest_bike.sas</div><svg style="position:absolute;left:60.3px;top:561.278px;" width="10.5" height="10.5" viewBox="0 0 10.5 10.5"><rect x="0.6" y="0.8" width="8.8" height="8.8" rx="0.8" fill="#f7f7f7" stroke="#dcdcdc" stroke-width="0.8"/><path d="M0.8 0.8H8.6Q9.6 0.8 9.6 1.8V8.6" fill="none" stroke="#f6c443" stroke-width="1.2"/><path d="M3.2 3.6L6.6 2.9L5.3 4.8L6.8 5.2L3.6 7.6L4.4 5.8L2.9 5.5Z" fill="#f4bd3a"/><circle cx="7.9" cy="8.3" r="1.7" fill="#f3b72c"/></svg><div style="position:absolute;left:74.8px;top:563.27px;font:400 9.1px/9.1px 'Liberation Sans',sans-serif;color:#3b3b3b;white-space:pre;">gradientboosting_students.sas</div><svg style="position:absolute;left:60.3px;top:575.945px;" width="10.5" height="10.5" viewBox="0 0 10.5 10.5"><rect x="0.6" y="0.8" width="8.8" height="8.8" rx="0.8" fill="#f7f7f7" stroke="#dcdcdc" stroke-width="0.8"/><path d="M0.8 0.8H8.6Q9.6 0.8 9.6 1.8V8.6" fill="none" stroke="#f6c443" stroke-width="1.2"/><path d="M3.2 3.6L6.6 2.9L5.3 4.8L6.8 5.2L3.6 7.6L4.4 5.8L2.9 5.5Z" fill="#f4bd3a"/><circle cx="7.9" cy="8.3" r="1.7" fill="#f3b72c"/></svg><div style="position:absolute;left:74.8px;top:577.94px;font:400 9.1px/9.1px 'Liberation Sans',sans-serif;color:#3b3b3b;white-space:pre;">linear_bike.sas</div><svg style="position:absolute;left:60.3px;top:590.612px;" width="10.5" height="10.5" viewBox="0 0 10.5 10.5"><rect x="0.6" y="0.8" width="8.8" height="8.8" rx="0.8" fill="#f7f7f7" stroke="#dcdcdc" stroke-width="0.8"/><path d="M0.8 0.8H8.6Q9.6 0.8 9.6 1.8V8.6" fill="none" stroke="#f6c443" stroke-width="1.2"/><path d="M3.2 3.6L6.6 2.9L5.3 4.8L6.8 5.2L3.6 7.6L4.4 5.8L2.9 5.5Z" fill="#f4bd3a"/><circle cx="7.9" cy="8.3" r="1.7" fill="#f3b72c"/></svg><div style="position:absolute;left:74.8px;top:592.61px;font:400 9.1px/9.1px 'Liberation Sans',sans-serif;color:#3b3b3b;white-space:pre;">linear_simulated.sas</div><svg style="position:absolute;left:60.3px;top:605.279px;" width="10.5" height="10.5" viewBox="0 0 10.5 10.5"><rect x="0.6" y="0.8" width="8.8" height="8.8" rx="0.8" fill="#f7f7f7" stroke="#dcdcdc" stroke-width="0.8"/><path d="M0.8 0.8H8.6Q9.6 0.8 9.6 1.8V8.6" fill="none" stroke="#f6c443" stroke-width="1.2"/><path d="M3.2 3.6L6.6 2.9L5.3 4.8L6.8 5.2L3.6 7.6L4.4 5.8L2.9 5.5Z" fill="#f4bd3a"/><circle cx="7.9" cy="8.3" r="1.7" fill="#f3b72c"/></svg><div style="position:absolute;left:74.8px;top:607.27px;font:400 9.1px/9.1px 'Liberation Sans',sans-serif;color:#3b3b3b;white-space:pre;">logistic_banking.sas</div><svg style="position:absolute;left:60.3px;top:619.946px;" width="10.5" height="10.5" viewBox="0 0 10.5 10.5"><rect x="0.6" y="0.8" width="8.8" height="8.8" rx="0.8" fill="#f7f7f7" stroke="#dcdcdc" stroke-width="0.8"/><path d="M0.8 0.8H8.6Q9.6 0.8 9.6 1.8V8.6" fill="none" stroke="#f6c443" stroke-width="1.2"/><path d="M3.2 3.6L6.6 2.9L5.3 4.8L6.8 5.2L3.6 7.6L4.4 5.8L2.9 5.5Z" fill="#f4bd3a"/><circle cx="7.9" cy="8.3" r="1.7" fill="#f3b72c"/></svg><div style="position:absolute;left:74.8px;top:621.94px;font:400 9.1px/9.1px 'Liberation Sans',sans-serif;color:#3b3b3b;white-space:pre;">logistic_simulated.sas</div><svg style="position:absolute;left:60.3px;top:634.613px;" width="10.5" height="10.5" viewBox="0 0 10.5 10.5"><rect x="0.6" y="0.8" width="8.8" height="8.8" rx="0.8" fill="#f7f7f7" stroke="#dcdcdc" stroke-width="0.8"/><path d="M0.8 0.8H8.6Q9.6 0.8 9.6 1.8V8.6" fill="none" stroke="#f6c443" stroke-width="1.2"/><path d="M3.2 3.6L6.6 2.9L5.3 4.8L6.8 5.2L3.6 7.6L4.4 5.8L2.9 5.5Z" fill="#f4bd3a"/><circle cx="7.9" cy="8.3" r="1.7" fill="#f3b72c"/></svg><div style="position:absolute;left:74.8px;top:636.61px;font:400 9.1px/9.1px 'Liberation Sans',sans-serif;color:#3b3b3b;white-space:pre;">pca_breastcancer.sas</div><svg style="position:absolute;left:60.3px;top:649.28px;" width="10.5" height="10.5" viewBox="0 0 10.5 10.5"><rect x="0.6" y="0.8" width="8.8" height="8.8" rx="0.8" fill="#f7f7f7" stroke="#dcdcdc" stroke-width="0.8"/><path d="M0.8 0.8H8.6Q9.6 0.8 9.6 1.8V8.6" fill="none" stroke="#f6c443" stroke-width="1.2"/><path d="M3.2 3.6L6.6 2.9L5.3 4.8L6.8 5.2L3.6 7.6L4.4 5.8L2.9 5.5Z" fill="#f4bd3a"/><circle cx="7.9" cy="8.3" r="1.7" fill="#f3b72c"/></svg><div style="position:absolute;left:74.8px;top:651.28px;font:400 9.1px/9.1px 'Liberation Sans',sans-serif;color:#3b3b3b;white-space:pre;">pca_mushroom.sas</div><svg style="position:absolute;left:60.3px;top:663.947px;" width="10.5" height="10.5" viewBox="0 0 10.5 10.5"><rect x="0.6" y="0.8" width="8.8" height="8.8" rx="0.8" fill="#f7f7f7" stroke="#dcdcdc" stroke-width="0.8"/><path d="M0.8 0.8H8.6Q9.6 0.8 9.6 1.8V8.6" fill="none" stroke="#f6c443" stroke-width="1.2"/><path d="M3.2 3.6L6.6 2.9L5.3 4.8L6.8 5.2L3.6 7.6L4.4 5.8L2.9 5.5Z" fill="#f4bd3a"/><circle cx="7.9" cy="8.3" r="1.7" fill="#f3b72c"/></svg><div style="position:absolute;left:74.8px;top:665.94px;font:400 9.1px/9.1px 'Liberation Sans',sans-serif;color:#3b3b3b;white-space:pre;">pca_simulated.sas</div><div style="position:absolute;left:45.3px;top:104.201px;width:0.9px;height:366.675px;background:#c8c8c8;"></div><div style="position:absolute;left:32px;top:675px;width:200px;height:0.9px;background:#dcdcdc;"></div><div style="position:absolute;left:32px;top:689.2px;width:200px;height:0.9px;background:#dcdcdc;"></div><svg style="position:absolute;left:37px;top:679.3px;" width="4.4" height="7.2" viewBox="0 0 4.4 7.2"><path d="M0.7 0.7L3.6 3.6L0.7 6.5" fill="none" stroke="#616161" stroke-width="0.9"/></svg><svg style="position:absolute;left:37px;top:693.9px;" width="4.4" height="7.2" viewBox="0 0 4.4 7.2"><path d="M0.7 0.7L3.6 3.6L0.7 6.5" fill="none" stroke="#616161" stroke-width="0.9"/></svg><div style="position:absolute;left:45.6px;top:679.43px;font:700 7.4px/7.4px 'Liberation Sans',sans-serif;color:#3b3b3b;white-space:pre;">OUTLINE</div><div style="position:absolute;left:45.6px;top:694.03px;font:700 7.4px/7.4px 'Liberation Sans',sans-serif;color:#3b3b3b;white-space:pre;">TIMELINE</div><div style="position:absolute;left:232px;top:22.5px;width:1048px;height:23.5px;background:#eeeeee;"></div><div style="position:absolute;left:232px;top:22.5px;width:145.4px;height:23.5px;background:#ffffff;"></div><div style="position:absolute;left:248.7px;top:22.6px;width:22px;height:1.3px;background:#2d5793;"></div><svg style="position:absolute;left:239.6px;top:30.3px;" width="9" height="9" viewBox="0 0 9 9"><path d="M0.6 2.9Q4.5 -0.9 8.4 2.9Q4.5 1.8 0.6 2.9Z" fill="#e8733a"/><path d="M0.6 6.3Q4.5 10.1 8.4 6.3Q4.5 7.4 0.6 6.3Z" fill="#e8733a"/><circle cx="8.1" cy="0.9" r="0.55" fill="#7a7a7a"/><circle cx="1.2" cy="8.2" r="0.65" fill="#7a7a7a"/><circle cx="0.8" cy="1.6" r="0.35" fill="#9a9a9a"/></svg><div style="position:absolute;left:253.8px;top:30.88px;font:400 9.0px/9.0px 'Liberation Sans',sans-serif;color:#333333;white-space:pre;">svm_bonus_sasviya.ipynb</div><svg style="position:absolute;left:364.5px;top:31.6px;" width="7" height="7" viewBox="0 0 7 7"><path d="M0.8 0.8L6.2 6.2M6.2 0.8L0.8 6.2" stroke="#424242" stroke-width="0.9"/></svg><svg style="position:absolute;left:1224.5px;top:29.8px;" width="10.5" height="10.5" viewBox="0 0 10.5 10.5"><g fill="none" stroke="#424242" stroke-width="0.9"><circle cx="5.25" cy="5.25" r="1.2"/><path d="M4.5 0.7H6L6.3 1.9L7.3 2.5L8.5 2.1L9.3 3.4L8.4 4.3V6.2L9.3 7.1L8.5 8.4L7.3 8L6.3 8.6L6 9.8H4.5L4.2 8.6L3.2 8L2 8.4L1.2 7.1L2.1 6.2V4.3L1.2 3.4L2 2.1L3.2 2.5L4.2 1.9Z"/></g></svg><svg style="position:absolute;left:1242.6px;top:29.8px;" width="10" height="10" viewBox="0 0 10 10"><g fill="none" stroke="#424242" stroke-width="0.9"><rect x="0.6" y="0.6" width="8.6" height="8.6" rx="0.8"/><path d="M4.9 0.6V9.2"/></g></svg><svg style="position:absolute;left:1260px;top:33.5px;" width="10" height="3" viewBox="0 0 10 3"><circle cx="1.2" cy="1.5" r="0.75" fill="#424242"/><circle cx="4.8" cy="1.5" r="0.75" fill="#424242"/><circle cx="8.4" cy="1.5" r="0.75" fill="#424242"/></svg><div style="position:absolute;left:242.6px;top:49.78px;font:400 9.0px/9.0px 'Liberation Sans',sans-serif;color:#616161;white-space:pre;">python</div><svg style="position:absolute;left:274.2px;top:49.6px;" width="5" height="7.5" viewBox="0 0 5 7.5"><path d="M0.7 0.7L3.8 3.75L0.7 6.8" fill="none" stroke="#7a7a7a" stroke-width="0.8"/></svg><svg style="position:absolute;left:282.2px;top:48.6px;" width="9" height="9" viewBox="0 0 9 9"><path d="M0.6 2.9Q4.5 -0.9 8.4 2.9Q4.5 1.8 0.6 2.9Z" fill="#e8733a"/><path d="M0.6 6.3Q4.5 10.1 8.4 6.3Q4.5 7.4 0.6 6.3Z" fill="#e8733a"/><circle cx="8.1" cy="0.9" r="0.55" fill="#7a7a7a"/><circle cx="1.2" cy="8.2" r="0.65" fill="#7a7a7a"/><circle cx="0.8" cy="1.6" r="0.35" fill="#9a9a9a"/></svg><div style="position:absolute;left:296px;top:49.78px;font:400 9.0px/9.0px 'Liberation Sans',sans-serif;color:#616161;white-space:pre;">svm_bonus_sasviya.ipynb</div><svg style="position:absolute;left:404.6px;top:49.6px;" width="5" height="7.5" viewBox="0 0 5 7.5"><path d="M0.7 0.7L3.8 3.75L0.7 6.8" fill="none" stroke="#7a7a7a" stroke-width="0.8"/></svg><svg style="position:absolute;left:412.2px;top:51.2px;" width="10" height="5.5" viewBox="0 0 10 5.5"><path d="M0.7 5V0.7L2.5 3L4.3 0.7V5" fill="none" stroke="#2a2a2a" stroke-width="1.3"/><path d="M7.7 0.8V3" stroke="#2a2a2a" stroke-width="1.1"/><path d="M6.3 2.6H9.1L7.7 4.9Z" fill="#2a2a2a"/></svg><div style="position:absolute;left:422.7px;top:50.03px;font:400 8.7px/8.7px 'Liberation Sans',sans-serif;color:#616161;white-space:pre;">svm.SVR from SAS® Viya® on Bonus</div><svg style="position:absolute;left:238.8px;top:65.5px;" width="9" height="9" viewBox="0 0 9 9"><path d="M4.5 0.3V8.7M0.3 4.5H8.7" stroke="#424242" stroke-width="0.9"/></svg><div style="position:absolute;left:253px;top:66.25px;font:400 8.8px/8.8px 'Liberation Sans',sans-serif;color:#3b3b3b;white-space:pre;">Code</div><svg style="position:absolute;left:284px;top:65.5px;" width="9" height="9" viewBox="0 0 9 9"><path d="M4.5 0.3V8.7M0.3 4.5H8.7" stroke="#424242" stroke-width="0.9"/></svg><div style="position:absolute;left:298.4px;top:65.91px;font:400 9.2px/9.2px 'Liberation Sans',sans-serif;color:#3b3b3b;white-space:pre;">Markdown</div><div style="position:absolute;left:348.6px;top:64.5px;width:0.9px;height:10.4px;background:#dedede;"></div><svg style="position:absolute;left:357.8px;top:65.8px;" width="7" height="7" viewBox="0 0 7 7"><rect x="0.6" y="0.6" width="5.8" height="5.8" rx="0.6" fill="none" stroke="#424242" stroke-width="0.9"/></svg><div style="position:absolute;left:369.5px;top:65.66px;font:400 9.5px/9.5px 'Liberation Sans',sans-serif;color:#3b3b3b;white-space:pre;">Interrupt</div><svg style="position:absolute;left:416px;top:65.3px;" width="9.5" height="9.5" viewBox="0 0 9.5 9.5"><g fill="none" stroke="#424242" stroke-width="1"><path d="M2.3 2.3A3.6 3.6 0 1 1 1.2 5"/><path d="M1.2 0.8V3.2H3.6"/></g></svg><div style="position:absolute;left:429.4px;top:66.25px;font:400 8.8px/8.8px 'Liberation Sans',sans-serif;color:#3b3b3b;white-space:pre;">Restart</div><svg style="position:absolute;left:468.5px;top:65.5px;" width="10" height="9" viewBox="0 0 10 9"><g fill="none" stroke="#424242" stroke-width="0.8"><path d="M0.5 1H9.5M0.5 3.3H9.5M0.5 5.6H6M0.5 7.9H6"/><path d="M7 5.8L9.3 8.3M9.3 5.8L7 8.3"/></g></svg><div style="position:absolute;left:482.5px;top:66.08px;font:400 9.0px/9.0px 'Liberation Sans',sans-serif;color:#3b3b3b;white-space:pre;">Clear All Outputs</div><svg style="position:absolute;left:560.5px;top:65.3px;" width="11" height="9.5" viewBox="0 0 11 9.5"><g fill="none" stroke="#424242" stroke-width="0.9"><path d="M2.2 3.2A3.5 3.5 0 0 1 8.8 3.2M8.8 6.3A3.5 3.5 0 0 1 2.2 6.3"/></g><path d="M0.4 3.2L2.2 5.2L4 3.2Z M7 6.3L8.8 4.3L10.6 6.3Z" fill="#424242"/></svg><div style="position:absolute;left:574.7px;top:66.08px;font:400 9.0px/9.0px 'Liberation Sans',sans-serif;color:#3b3b3b;white-space:pre;">Go To</div><div style="position:absolute;left:606.6px;top:64.5px;width:0.9px;height:10.4px;background:#dedede;"></div><svg style="position:absolute;left:613.8px;top:65px;" width="11" height="10" viewBox="0 0 11 10"><g fill="none" stroke="#424242" stroke-width="0.8"><rect x="0.5" y="0.6" width="10" height="8.8" rx="0.6"/><path d="M0.5 2.6H10.5"/><rect x="2" y="4.6" width="7" height="3.2" stroke-width="0.6"/><path d="M3.6 5.3V7.1M5.5 5.3V7.1M7.4 5.3V7.1" stroke-width="0.6"/></g></svg><div style="position:absolute;left:628px;top:66.08px;font:400 9.0px/9.0px 'Liberation Sans',sans-serif;color:#3b3b3b;white-space:pre;">Variables</div><svg style="position:absolute;left:675.2px;top:65.8px;" width="10.5" height="8.5" viewBox="0 0 10.5 8.5"><g fill="none" stroke="#424242" stroke-width="0.8"><path d="M0.3 0.8H1.3M3 0.8H10.2M0.3 3H1.3M3 3H10.2M0.3 5.2H1.3M3 5.2H10.2M0.3 7.4H1.3M3 7.4H10.2"/></g></svg><div style="position:absolute;left:689px;top:66.08px;font:400 9.0px/9.0px 'Liberation Sans',sans-serif;color:#3b3b3b;white-space:pre;">Outline</div><svg style="position:absolute;left:728.3px;top:68.5px;" width="10" height="3" viewBox="0 0 10 3"><circle cx="1.2" cy="1.5" r="0.75" fill="#424242"/><circle cx="4.8" cy="1.5" r="0.75" fill="#424242"/><circle cx="8.4" cy="1.5" r="0.75" fill="#424242"/></svg><svg style="position:absolute;left:1202.8px;top:64.4px;" width="10.5" height="11" viewBox="0 0 10.5 11"><g fill="none" stroke="#424242" stroke-width="0.8"><path d="M3 0.6H7.5V7H3Z"/><path d="M3.8 2.5H6.7M1.8 7.2L0.8 10.2H9.7L8.7 7.2"/><path d="M0.8 8.8H9.7"/></g></svg><div style="position:absolute;left:1217.6px;top:66.33px;font:400 8.7px/8.7px 'Liberation Sans',sans-serif;color:#3b3b3b;white-space:pre;">Python 3.11.5</div><div style="position:absolute;left:232px;top:78px;width:1048px;height:2.1px;background:#eeeeee;"></div><div style="position:absolute;left:235px;top:78.5px;width:1.8px;height:92.3px;background:#d9d9d9;"></div><div style="position:absolute;left:261.5px;top:95.69px;font:400 13.95px/13.95px 'Liberation Sans',sans-serif;color:#3b3b3b;white-space:pre;">Data Preparation</div><div style="position:absolute;left:261.5px;top:128.83px;font:400 12.6px/12.6px 'Liberation Sans',sans-serif;color:#3b3b3b;white-space:pre;">About the data set</div><div style="position:absolute;left:262px;top:159.18px;font:400 9.95px/9.95px 'Liberation Sans',sans-serif;color:#3b3b3b;white-space:pre;">This data set contains the bonuses for 10 job positions at a hypothetical company.</div><div style="position:absolute;left:235px;top:191.2px;width:1.8px;height:144.5px;background:#d9d9d9;"></div><svg style="position:absolute;left:241.5px;top:193.5px;" width="8" height="9.5" viewBox="0 0 8 9.5"><path d="M0.9 0.9L7 4.75L0.9 8.6Z" fill="none" stroke="#424242" stroke-width="0.95" stroke-linejoin="round"/></svg><svg style="position:absolute;left:253.2px;top:196.4px;" width="6" height="4" viewBox="0 0 6 4"><path d="M0.6 0.7L2.9 3L5.2 0.7" fill="none" stroke="#5a5a5a" stroke-width="1"/></svg><div style="position:absolute;left:261.2px;top:190.8px;width:1008.1px;height:144.89999999999998px;background:#eeeeee;box-sizing:border-box;border:0.8px solid #e6e6e6;"></div><div style="position:absolute;left:284.5px;top:201.67px;font:400 8.0px/8.0px 'Liberation Mono',monospace;color:#1f1f1f;white-space:pre;-webkit-text-stroke:0.15px currentColor;"><span style="color:#af00db">import</span> os</div><div style="position:absolute;left:284.5px;top:213.67px;font:400 8.0px/8.0px 'Liberation Mono',monospace;color:#1f1f1f;white-space:pre;-webkit-text-stroke:0.15px currentColor;"><span style="color:#af00db">import</span> numpy <span style="color:#af00db">as</span> np</div><div style="position:absolute;left:284.5px;top:225.67px;font:400 8.0px/8.0px 'Liberation Mono',monospace;color:#1f1f1f;white-space:pre;-webkit-text-stroke:0.15px currentColor;"><span style="color:#af00db">import</span> matplotlib.pyplot <span style="color:#af00db">as</span> plt</div><div style="position:absolute;left:284.5px;top:237.67px;font:400 8.0px/8.0px 'Liberation Mono',monospace;color:#1f1f1f;white-space:pre;-webkit-text-stroke:0.15px currentColor;"><span style="color:#af00db">import</span> pandas <span style="color:#af00db">as</span> pd</div><div style="position:absolute;left:284.5px;top:249.67px;font:400 8.0px/8.0px 'Liberation Mono',monospace;color:#1f1f1f;white-space:pre;-webkit-text-stroke:0.15px currentColor;"><span style="color:#af00db">import</span> warnings</div><div style="position:absolute;left:284.5px;top:273.67px;font:400 8.0px/8.0px 'Liberation Mono',monospace;color:#1f1f1f;white-space:pre;-webkit-text-stroke:0.15px currentColor;"><span style="color:#008000"># Filter out UserWarning messages</span></div><div style="position:absolute;left:284.5px;top:285.67px;font:400 8.0px/8.0px 'Liberation Mono',monospace;color:#1f1f1f;white-space:pre;-webkit-text-stroke:0.15px currentColor;">warnings.filterwarnings<span style="color:#0431fa">(</span><span style="color:#a31515">&quot;ignore&quot;</span>, <span style="color:#001080">category</span>=<span style="color:#2b79a8">UserWarning</span><span style="color:#0431fa">)</span></div><div style="position:absolute;left:284.5px;top:297.67px;font:400 8.0px/8.0px 'Liberation Mono',monospace;color:#1f1f1f;white-space:pre;-webkit-text-stroke:0.15px currentColor;"><span style="color:#008000"># Filter out DeprecationWarning messages</span></div><div style="position:absolute;left:284.5px;top:309.67px;font:400 8.0px/8.0px 'Liberation Mono',monospace;color:#1f1f1f;white-space:pre;-webkit-text-stroke:0.15px currentColor;">warnings.filterwarnings<span style="color:#0431fa">(</span><span style="color:#a31515">&quot;ignore&quot;</span>, <span style="color:#001080">category</span>=<span style="color:#2b79a8">DeprecationWarning</span><span style="color:#0431fa">)</span></div><div style="position:absolute;left:244.0px;top:324.77px;font:400 7.6px/7.6px 'Liberation Sans',sans-serif;color:#8a8a8a;white-space:pre;letter-spacing:1.100px;">[1]</div><svg style="position:absolute;left:272px;top:324.3px;" width="9" height="7" viewBox="0 0 9 7"><path d="M0.8 3.6L3.2 6L8.2 0.8" fill="none" stroke="#388a34" stroke-width="1"/></svg><div style="position:absolute;left:289.3px;top:325.16px;font:400 8.2px/8.2px 'Liberation Sans',sans-serif;color:#444444;white-space:pre;">1.2s</div><div style="position:absolute;left:1238.6px;top:324.30px;font:400 8.5px/8.5px 'Liberation Sans',sans-serif;color:#4a4a4a;white-space:pre;">Python</div><svg style="position:absolute;left:433.5px;top:237.8px;" width="6" height="11" viewBox="0 0 6 11"><path d="M0.8 0.6C2 0.6 3 1 3 2V9C3 10 2 10.4 0.8 10.4M5.2 0.6C4 0.6 3 1 3 2V9C3 10 4 10.4 5.2 10.4M1.8 5.5H4.2" fill="none" stroke="#333" stroke-width="0.8"/></svg><div style="position:absolute;left:261.4px;top:359.13px;font:400 12.6px/12.6px 'Liberation Sans',sans-serif;color:#3b3b3b;white-space:pre;">Importing the data set</div><div style="position:absolute;left:261.2px;top:393.1px;width:1008.1px;height:84.79999999999995px;background:#eeeeee;box-sizing:border-box;border:0.8px solid #e6e6e6;"></div><div style="position:absolute;left:284.5px;top:403.57px;font:400 8.0px/8.0px 'Liberation Mono',monospace;color:#1f1f1f;white-space:pre;-webkit-text-stroke:0.15px currentColor;">workspace=<span style="color:#0000ff">f&#x27;</span><span style="color:#0000ff">{</span>os.path.abspath<span style="color:#319331">(</span><span style="color:#a31515">&quot;&quot;</span><span style="color:#319331">)</span><span style="color:#0000ff">}</span><span style="color:#a31515">/../data/&#x27;</span></div><div style="position:absolute;left:284.5px;top:415.57px;font:400 8.0px/8.0px 'Liberation Mono',monospace;color:#1f1f1f;white-space:pre;-webkit-text-stroke:0.15px currentColor;">dataset = pd.read_csv<span style="color:#0431fa">(</span>workspace + <span style="color:#a31515">&quot;bonus.csv&quot;</span><span style="color:#0431fa">)</span></div><div style="position:absolute;left:284.5px;top:439.57px;font:400 8.0px/8.0px 'Liberation Mono',monospace;color:#1f1f1f;white-space:pre;-webkit-text-stroke:0.15px currentColor;">X = dataset.iloc<span style="color:#0431fa">[</span>:,<span style="color:#098658">1</span>:<span style="color:#098658">2</span><span style="color:#0431fa">]</span>.values.astype<span style="color:#0431fa">(</span><span style="color:#2b79a8">float</span><span style="color:#0431fa">)</span></div><div style="position:absolute;left:284.5px;top:451.57px;font:400 8.0px/8.0px 'Liberation Mono',monospace;color:#1f1f1f;white-space:pre;-webkit-text-stroke:0.15px currentColor;">y = dataset.iloc<span style="color:#0431fa">[</span>:,<span style="color:#098658">2</span>:<span style="color:#098658">3</span><span style="color:#0431fa">]</span>.values.astype<span style="color:#0431fa">(</span><span style="color:#2b79a8">float</span><span style="color:#0431fa">)</span></div><div style="position:absolute;left:244.0px;top:466.97px;font:400 7.6px/7.6px 'Liberation Sans',sans-serif;color:#8a8a8a;white-space:pre;letter-spacing:1.100px;">[2]</div><svg style="position:absolute;left:272.4px;top:466.3px;" width="9" height="9" viewBox="0 0 9 9"><g fill="none" stroke="#555" stroke-width="0.9"><path d="M1.6 2.4A3.4 3.4 0 0 1 7.6 3.6"/><path d="M7.3 6.4A3.4 3.4 0 0 1 1.3 5.2"/></g><path d="M0.4 1.6L2.9 1.4L1.5 3.6Z M8.5 7.2L6 7.4L7.4 5.2Z" fill="#555"/></svg><div style="position:absolute;left:289.3px;top:467.36px;font:400 8.2px/8.2px 'Liberation Sans',sans-serif;color:#444444;white-space:pre;">0.0s</div><div style="position:absolute;left:1238.6px;top:466.50px;font:400 8.5px/8.5px 'Liberation Sans',sans-serif;color:#4a4a4a;white-space:pre;">Python</div><div style="position:absolute;left:261.2px;top:498.2px;width:1008.1px;height:37.599999999999966px;background:#eeeeee;box-sizing:border-box;border:0.8px solid #e6e6e6;"></div><div style="position:absolute;left:284.5px;top:509.07px;font:400 8.0px/8.0px 'Liberation Mono',monospace;color:#1f1f1f;white-space:pre;-webkit-text-stroke:0.15px currentColor;">dataset</div><div style="position:absolute;left:244.0px;top:524.87px;font:400 7.6px/7.6px 'Liberation Sans',sans-serif;color:#8a8a8a;white-space:pre;letter-spacing:1.100px;">[3]</div><svg style="position:absolute;left:272.4px;top:524.1999999999999px;" width="9" height="9" viewBox="0 0 9 9"><g fill="none" stroke="#555" stroke-width="0.9"><path d="M1.6 2.4A3.4 3.4 0 0 1 7.6 3.6"/><path d="M7.3 6.4A3.4 3.4 0 0 1 1.3 5.2"/></g><path d="M0.4 1.6L2.9 1.4L1.5 3.6Z M8.5 7.2L6 7.4L7.4 5.2Z" fill="#555"/></svg><div style="position:absolute;left:289.3px;top:525.26px;font:400 8.2px/8.2px 'Liberation Sans',sans-serif;color:#444444;white-space:pre;">0.0s</div><div style="position:absolute;left:1238.6px;top:524.40px;font:400 8.5px/8.5px 'Liberation Sans',sans-serif;color:#4a4a4a;white-space:pre;">Python</div><svg style="position:absolute;left:243px;top:545.5px;" width="10" height="3" viewBox="0 0 10 3"><circle cx="1.2" cy="1.5" r="0.7" fill="#616161"/><circle cx="4.6" cy="1.5" r="0.7" fill="#616161"/><circle cx="8" cy="1.5" r="0.7" fill="#616161"/></svg><div style="position:absolute;left:262px;top:559.15px;font:400 14.0px/14.0px 'Liberation Sans',sans-serif;color:#3b3b3b;white-space:pre;">Building the Support Vector Regression Model</div><div style="position:absolute;left:262px;top:589.98px;font:400 9.95px/9.95px 'Liberation Sans',sans-serif;color:#3b3b3b;white-space:pre;">For details about using the <span style="color:#a31515;letter-spacing:-0.9px">SVR</span> class of the <span style="font-family:'Liberation Mono',monospace;color:#a31515;font-size:9.4px">sasviya</span> package, see the <span style="color:#1058a8">SVR documentation</span>.</div><div style="position:absolute;left:1273.2px;top:87.7px;width:6.8px;height:122.2px;background:#bebebe;"></div><div style="position:absolute;left:1273.3px;top:215.3px;width:2.6px;height:3.7px;background:#267a35;"></div><div style="position:absolute;left:232px;top:607.5px;width:1048px;height:96.5px;background:#ffffff;"></div><div style="position:absolute;left:232px;top:606.8px;width:1048px;height:2.2px;background:#e3e3e3;"></div><div style="position:absolute;left:245.4px;top:617.79px;font:400 7.1px/7.1px 'Liberation Sans',sans-serif;color:#555555;white-space:pre;">PROBLEMS</div><div style="position:absolute;left:301.7px;top:617.79px;font:400 7.1px/7.1px 'Liberation Sans',sans-serif;color:#3b3b3b;white-space:pre;">OUTPUT</div><div style="position:absolute;left:300px;top:627.6px;width:33.5px;height:0.9px;background:#555555;"></div><div style="position:absolute;left:348.4px;top:617.79px;font:400 7.1px/7.1px 'Liberation Sans',sans-serif;color:#555555;white-space:pre;">DEBUG CONSOLE</div><div style="position:absolute;left:427.4px;top:617.79px;font:400 7.1px/7.1px 'Liberation Sans',sans-serif;color:#555555;white-space:pre;">TERMINAL</div><div style="position:absolute;left:480.7px;top:617.79px;font:400 7.1px/7.1px 'Liberation Sans',sans-serif;color:#555555;white-space:pre;">PORTS</div><div style="position:absolute;left:521.2px;top:617.79px;font:400 7.1px/7.1px 'Liberation Sans',sans-serif;color:#555555;white-space:pre;">JUPYTER</div><div style="position:absolute;left:1072.3px;top:613.4px;width:112.5px;height:12.4px;background:#ffffff;box-sizing:border-box;border:1px solid #cecece;border-radius:3px;"></div><div style="position:absolute;left:1078px;top:616.17px;font:400 7.6px/7.6px 'Liberation Sans',sans-serif;color:#3b3b3b;white-space:pre;">SAS Log</div><svg style="position:absolute;left:1172px;top:617.6px;" width="8" height="5" viewBox="0 0 8 5"><path d="M0.6 0.6L4 4L7.4 0.6" fill="none" stroke="#424242" stroke-width="0.9"/></svg><svg style="position:absolute;left:1190.8px;top:614.8px;" width="10" height="9" viewBox="0 0 10 9"><g fill="none" stroke="#424242" stroke-width="0.8"><path d="M0.5 1H9.5M0.5 3.3H9.5M0.5 5.6H6M0.5 7.9H6"/><path d="M7 5.8L9.3 8.3M9.3 5.8L7 8.3"/></g></svg><svg style="position:absolute;left:1208px;top:614px;" width="9.5" height="10" viewBox="0 0 9.5 10"><g fill="none" stroke="#424242" stroke-width="0.9"><rect x="0.8" y="4.3" width="7.9" height="5.1" rx="0.8"/><path d="M2.5 4.3V3A2.25 2.25 0 0 1 7 3V4.3"/></g></svg><svg style="position:absolute;left:1225px;top:614px;" width="11" height="10" viewBox="0 0 11 10"><g fill="none" stroke="#b8b8b8" stroke-width="0.9"><path d="M3 1H6.5L9 3.5V9.4H3Z"/><path d="M3 2.5H1V9.4"/></g></svg><svg style="position:absolute;left:1244px;top:616.5px;" width="9.5" height="5.5" viewBox="0 0 9.5 5.5"><path d="M0.6 4.9L4.75 0.8L8.9 4.9" fill="none" stroke="#424242" stroke-width="0.9"/></svg><svg style="position:absolute;left:1261px;top:615.3px;" width="7" height="7" viewBox="0 0 7 7"><path d="M0.6 0.6L6.4 6.4M6.4 0.6L0.6 6.4" stroke="#424242" stroke-width="0.9"/></svg><div style="position:absolute;left:232px;top:632px;width:1039px;height:72px;overflow:hidden;"><div style="position:absolute;left:14px;top:-1.83px;font:400 8px/8px 'Liberation Mono',monospace;color:#1f1f1f;white-space:pre;-webkit-text-stroke:0.3px #1f1f1f;">187</div><div style="position:absolute;left:37.4px;top:-1.83px;font:400 8px/8px 'Liberation Mono',monospace;color:#1f1f1f;white-space:pre;-webkit-text-stroke:0.3px #1f1f1f;">/<span style="position:relative;top:1.1px">******************************************************************************</span></div><div style="position:absolute;left:14px;top:10.17px;font:400 8px/8px 'Liberation Mono',monospace;color:#1f1f1f;white-space:pre;-webkit-text-stroke:0.3px #1f1f1f;">188</div><div style="position:absolute;left:37.4px;top:10.17px;font:400 8px/8px 'Liberation Mono',monospace;color:#1f1f1f;white-space:pre;-webkit-text-stroke:0.3px #1f1f1f;"></div><div style="position:absolute;left:14px;top:22.17px;font:400 8px/8px 'Liberation Mono',monospace;color:#1f1f1f;white-space:pre;-webkit-text-stroke:0.3px #1f1f1f;">189</div><div style="position:absolute;left:37.4px;top:22.17px;font:400 8px/8px 'Liberation Mono',monospace;color:#1f1f1f;white-space:pre;-webkit-text-stroke:0.3px #1f1f1f;"> We can use the SGPLOT procedure to visualize the data created in this Data Step.</div><div style="position:absolute;left:14px;top:34.17px;font:400 8px/8px 'Liberation Mono',monospace;color:#1f1f1f;white-space:pre;-webkit-text-stroke:0.3px #1f1f1f;">190</div><div style="position:absolute;left:37.4px;top:34.17px;font:400 8px/8px 'Liberation Mono',monospace;color:#1f1f1f;white-space:pre;-webkit-text-stroke:0.3px #1f1f1f;"></div><div style="position:absolute;left:14px;top:46.17px;font:400 8px/8px 'Liberation Mono',monospace;color:#1f1f1f;white-space:pre;-webkit-text-stroke:0.3px #1f1f1f;">191</div><div style="position:absolute;left:37.4px;top:46.17px;font:400 8px/8px 'Liberation Mono',monospace;color:#1f1f1f;white-space:pre;-webkit-text-stroke:0.3px #1f1f1f;"> <span style="position:relative;top:1.1px">******************************************************************************</span>/</div><div style="position:absolute;left:14px;top:58.17px;font:400 8px/8px 'Liberation Mono',monospace;color:#1f1f1f;white-space:pre;-webkit-text-stroke:0.3px #1f1f1f;">192</div><div style="position:absolute;left:37.4px;top:58.17px;font:400 8px/8px 'Liberation Mono',monospace;color:#1f1f1f;white-space:pre;-webkit-text-stroke:0.3px #1f1f1f;"></div><div style="position:absolute;left:14px;top:70.17px;font:400 8px/8px 'Liberation Mono',monospace;color:#1f1f1f;white-space:pre;-webkit-text-stroke:0.3px #1f1f1f;">193</div><div style="position:absolute;left:37.4px;top:70.17px;font:400 8px/8px 'Liberation Mono',monospace;color:#1f1f1f;white-space:pre;-webkit-text-stroke:0.3px #1f1f1f;">title2 &quot;Use DO LOOP to create circle data&quot;;</div></div><div style="position:absolute;left:232px;top:631.1px;width:1039px;height:2.2px;background:#f3f3f3;"></div><div style="position:absolute;left:1271px;top:631px;width:0.8px;height:73px;background:#e4e4e4;"></div><div style="position:absolute;left:0px;top:704px;width:1280px;height:14px;background:#0062c1;"></div><div style="position:absolute;left:0px;top:704px;width:22px;height:14px;background:#16704a;"></div><svg style="position:absolute;left:8px;top:706.8px;" width="8" height="8" viewBox="0 0 8 8"><path d="M0.6 2.2L2.6 4.2L0.6 6.2M7.4 1L4.6 3.2L7.4 5.4" fill="none" stroke="#9fd89f" stroke-width="1"/></svg><svg style="position:absolute;left:27.8px;top:706.3px;" width="9.5" height="9.5" viewBox="0 0 9.5 9.5"><g fill="none" stroke="#ffffff" stroke-width="0.9"><circle cx="4.75" cy="4.75" r="4"/><path d="M3 3L6.5 6.5M6.5 3L3 6.5"/></g></svg><div style="position:absolute;left:40px;top:707.40px;font:400 8.5px/8.5px 'Liberation Sans',sans-serif;color:#ffffff;white-space:pre;-webkit-text-stroke:0.25px #fff;">0</div><svg style="position:absolute;left:46.8px;top:706.3px;" width="9.5" height="9" viewBox="0 0 9.5 9"><g fill="none" stroke="#ffffff" stroke-width="0.9"><path d="M4.75 0.8L8.8 8.2H0.7Z"/><path d="M4.75 3.5V5.8M4.75 6.6V7.3"/></g></svg><div style="position:absolute;left:58.8px;top:707.40px;font:400 8.5px/8.5px 'Liberation Sans',sans-serif;color:#ffffff;white-space:pre;-webkit-text-stroke:0.25px #fff;">0</div><svg style="position:absolute;left:74.8px;top:706.3px;" width="9" height="9" viewBox="0 0 9 9"><g fill="none" stroke="#ffffff" stroke-width="0.8"><circle cx="4.5" cy="3" r="0.9"/><path d="M4.5 4V8.5M2.5 8.5L4.5 4L6.5 8.5M2.2 1A3 3 0 0 0 2.2 5M6.8 1A3 3 0 0 1 6.8 5"/></g></svg><div style="position:absolute;left:86.2px;top:707.40px;font:400 8.5px/8.5px 'Liberation Sans',sans-serif;color:#ffffff;white-space:pre;-webkit-text-stroke:0.25px #fff;">0</div><svg style="position:absolute;left:101.8px;top:706px;" width="10" height="10" viewBox="0 0 10 10"><g fill="none" stroke="#ffffff" stroke-width="0.9"><rect x="0.6" y="0.8" width="8.5" height="6.3" rx="0.7"/><path d="M3 9H5"/></g><circle cx="7.8" cy="7.8" r="2.1" fill="#ffffff"/></svg><div style="position:absolute;left:113px;top:707.40px;font:400 8.5px/8.5px 'Liberation Sans',sans-serif;color:#ffffff;white-space:pre;-webkit-text-stroke:0.25px #fff;">Workbench</div><div style="position:absolute;left:1150.3px;top:707.40px;font:400 8.5px/8.5px 'Liberation Sans',sans-serif;color:#ffffff;white-space:pre;-webkit-text-stroke:0.25px #fff;">Cell 1 of 22</div><div style="position:absolute;left:1204.7px;top:707.70px;font:400 8.15px/8.15px 'Liberation Sans',sans-serif;color:#ffffff;white-space:pre;-webkit-text-stroke:0.25px #fff;">Layout: U.S.</div><svg style="position:absolute;left:1261.3px;top:706.2px;" width="9" height="9.5" viewBox="0 0 9 9.5"><g fill="none" stroke="#ffffff" stroke-width="0.9"><path d="M1 7H8M1.8 7V4A2.7 2.7 0 0 1 7.2 4V7M3.5 8.3H5.5"/></g></svg>
</body></html>
